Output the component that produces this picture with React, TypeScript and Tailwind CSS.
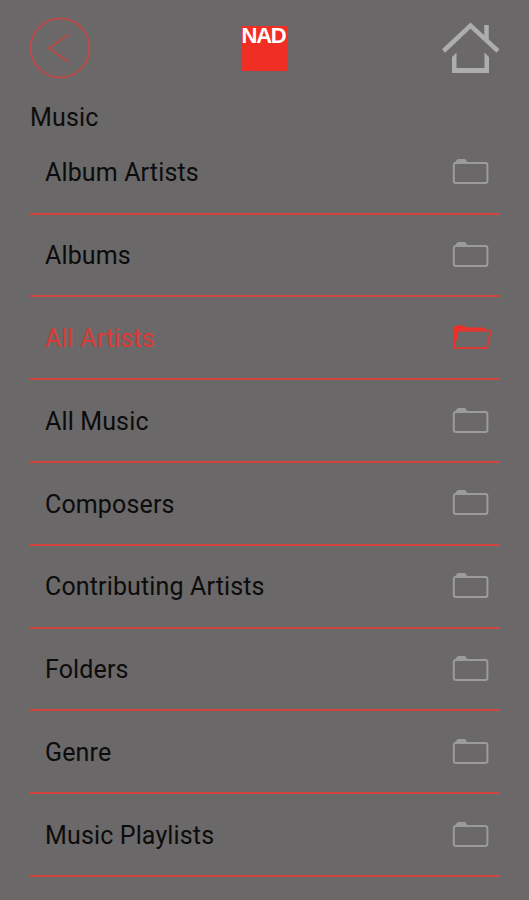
import { useState } from 'react'

const folders = [
  'Album Artists',
  'Albums',
  'All Artists',
  'All Music',
  'Composers',
  'Contributing Artists',
  'Folders',
  'Genre',
  'Music Playlists',
]

function BackIcon() {
  return (
    <svg width="64" height="64" viewBox="0 0 64 64" fill="none" stroke="#b94b4a">
      <circle cx="32" cy="32" r="29.5" strokeWidth="2" />
      <path d="M40.5 18.5 L21 32 L40.5 46" strokeWidth="2" />
    </svg>
  )
}

function HomeIcon() {
  return (
    <svg width="60" height="54" viewBox="0 0 60 54" fill="none">
      <path d="M2.5 30 L29.5 4.5 L57 30" stroke="#adadad" strokeWidth="4.5" />
      <path d="M45.5 4 V20" stroke="#adadad" strokeWidth="4.5" />
      <path d="M11 36 L15.5 31.5 V47 H43.5 V31.5 L48 36 V52 H11 Z" fill="#adadad" />
    </svg>
  )
}

function FolderIcon() {
  return (
    <svg width="40" height="28" viewBox="0 0 40 28" fill="none">
      <path d="M2 5.5 L5 1.8 Q5.5 1 6.5 1 H12.5 Q13.5 1 14 2 L16 5.5 Z" fill="#9b9b9b" />
      <rect x="1.8" y="5" width="33.6" height="20" rx="2" stroke="#9b9b9b" strokeWidth="2" />
    </svg>
  )
}

function OpenFolderIcon() {
  return (
    <svg width="40" height="28" viewBox="0 0 40 28" fill="none">
      <path d="M1 23 V5 Q1 4 2 3 L4 1.5 H11.5 L14 3.5 H31 Q33.5 4 34 7.5 H6 L3 24 Z" fill="#f02e24" />
      <path d="M6 6.5 H37 Q38.8 7 38.3 9 L35 24 H2.5 Q1.5 24 1.5 22" stroke="#dc3a34" strokeWidth="1.8" />
    </svg>
  )
}

export default function App() {
  const [selected, setSelected] = useState('All Artists')

  return (
    <div className="h-[900px] w-full overflow-hidden bg-[#6a6868] pl-[30px] pr-[29px] font-['Roboto',sans-serif] text-[25px] tracking-[0.14px] text-[#0c0c0c]">
      <header className="-ml-0.5 flex h-24 items-center justify-between">
        <button className="w-16" aria-label="Back">
          <BackIcon />
        </button>
        <div className="-ml-1.5 flex h-[45px] w-[46px] justify-center bg-[#f02e24] font-['Liberation_Sans',sans-serif] text-[22px] font-bold leading-[19px] tracking-[-1.2px] text-white">
          NAD
        </div>
        <button className="-mr-px" aria-label="Home">
          <HomeIcon />
        </button>
      </header>

      <h1 className="h-[35.8px] pt-[7px] leading-[30px]">Music</h1>

      <ul>
        {folders.map((name) => (
          <li
            key={name}
            onClick={() => setSelected(name)}
            className="flex h-[82.8px] cursor-pointer items-center justify-between border-b-2 border-[#d2453e] pl-[15px] pr-[8px]"
          >
            <span className={name === selected ? 'pt-0.5 text-[#dc3a34]' : 'pt-0.5'}>{name}</span>
            {name === selected ? <OpenFolderIcon /> : <FolderIcon />}
          </li>
        ))}
      </ul>
    </div>
  )
}
